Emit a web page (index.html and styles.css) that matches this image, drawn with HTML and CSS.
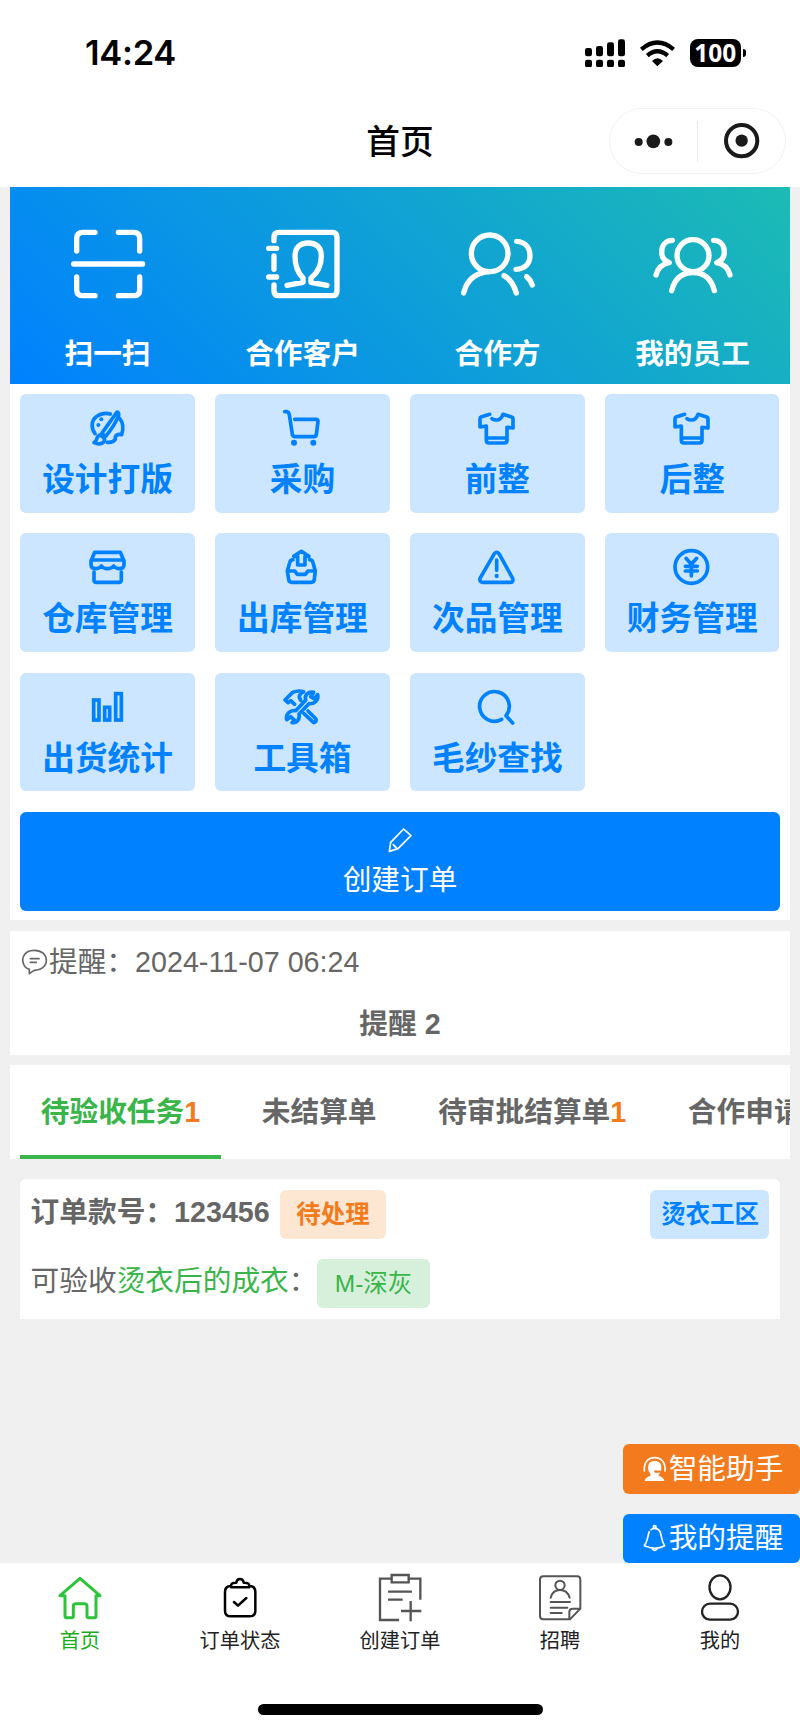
FILE: index.html
```html
<!DOCTYPE html>
<html lang="zh-CN">
<head>
<meta charset="utf-8">
<title>首页</title>
<link rel="stylesheet" href="styles.css">
</head>
<body>
<svg class="defs" aria-hidden="true">
  <symbol id="shirt" viewBox="232 70 120 120"><path d="M270 89L244 97Q241 98 241 103V127L260 124V167Q260 175 268 175H314Q322 175 322 167V128L340 130V103Q340 98 336 97L310 89Q304 106 291 106Q283 106 277 102M262 160H320"/></symbol>
</svg>
<header class="header">
  <div class="status">
    <span class="time">14:24</span>
    <div class="status-icons">
      <svg class="signal" viewBox="555 116 120 86"><rect x="555" y="143" width="21" height="25" rx="7"/><rect x="588" y="137" width="21" height="31" rx="7"/><rect x="621" y="126" width="21" height="42" rx="7"/><rect x="654" y="117" width="21" height="51" rx="7"/><rect x="555" y="178" width="21" height="23" rx="7"/><rect x="588" y="178" width="21" height="23" rx="7"/><rect x="621" y="178" width="21" height="23" rx="7"/><rect x="654" y="178" width="21" height="23" rx="7"/></svg>
      <svg class="wifi" viewBox="720 116 105 86"><path class="arc" d="M724 147Q772 106 821 147M742 166Q772 140 803 166"/><path d="M756 182Q772 166 789 182L772 198Z"/></svg>
      <div class="battery"><span class="battery-body">100</span><span class="battery-cap"></span></div>
    </div>
  </div>
  <div class="navbar">
    <h1 class="title">首页</h1>
    <div class="capsule">
      <svg class="more" viewBox="700 395 125 56"><circle cx="717" cy="425" r="12"/><circle cx="761" cy="423" r="20.500"/><circle cx="806" cy="425" r="12"/></svg>
      <span class="capsule-line"></span>
      <svg class="target" viewBox="970 368 112 112"><circle class="ring" cx="1026" cy="424" r="47"/><circle cx="1026" cy="424" r="18.500"/></svg>
    </div>
  </div>
</header>

<main class="page">
  <section class="panel">
    <nav class="hero">
      <a class="hero-item"><svg class="icon" viewBox="203 116 240 240"><path d="M229 197V160Q229 141 248 141H284M354 141H400Q418 141 418 160V197M220 236H427M229 275V313Q229 331 248 331H284M354 331H400Q418 331 418 313V275"/></svg><span>扫一扫</span></a>
      <a class="hero-item"><svg class="icon" viewBox="788 116 240 240"><path d="M821 166V155Q821 141 836 141H996Q1010 141 1010 156V316Q1010 331 996 331H836Q821 331 821 316V299M821 212V252M805 189H829M805 275H829M860 300L908 291V278C892 262 884 240 884 212C884 186 900 173 924 173C948 173 963 186 963 212C963 240 952 262 932 278V291L980 300"/></svg><span>合作客户</span></a>
      <a class="hero-item"><svg class="icon" viewBox="172 116 240 240"><circle cx="267" cy="204" r="55"/><path d="M189 323C198 285 225 262 267 259M310 271C330 282 340 298 347 323M348 168C375 170 388 188 388 211C388 235 372 250 346 252M378 274Q390 284 395 299"/></svg><span>合作方</span></a>
      <a class="hero-item"><svg class="icon" viewBox="757 116 240 240"><circle cx="877" cy="211" r="48"/><path d="M813 316C822 280 845 262 877 262C909 262 932 280 941 316M815 165C795 165 783 180 783 200C783 215 790 226 806 232C784 236 771 250 766 269M939 165C959 165 971 180 971 200C971 215 964 226 948 232C970 236 983 250 988 269"/></svg><span>我的员工</span></a>
    </nav>
    <div class="tiles">
      <a class="tile"><svg class="icon" viewBox="263 70 120 120"><path d="M284 147C272 130 272 108 288 96C300 86 318 84 330 88M358 101C369 115 369 135 364 150C350 146 343 154 345 164C340 172 331 174 321 173"/><path d="M350 82L304 147L316 155C330 138 346 116 355 92Q356 82 350 82ZM298 151C285 156 295 166 281 174C300 182 316 175 312 160Z"/><circle class="dot" cx="303" cy="104" r="6"/><circle class="dot" cx="294" cy="121" r="6"/></svg><span>设计打版</span></a>
      <a class="tile"><svg class="icon" viewBox="848 70 120 120"><path d="M856 81H862Q868 82 870 90L879 149Q880 156 888 156H944Q950 156 951 150L956 110Q956 104 950 104H886"/><circle class="dot" cx="884" cy="174" r="9"/><circle class="dot" cx="942" cy="174" r="9"/></svg><span>采购</span></a>
      <a class="tile"><svg class="icon"><use href="#shirt"/></svg><span>前整</span></a>
      <a class="tile"><svg class="icon"><use href="#shirt"/></svg><span>后整</span></a>
      <a class="tile"><svg class="icon" viewBox="263 488 120 120"><path d="M283 504L272 530V540Q272 553 285 553Q297 553 303 545Q309 553 321 553Q334 553 340 545Q346 553 358 553Q371 553 371 540V530L360 504ZM273 527H370M281 563V587Q281 594 288 594H356Q363 594 363 587V563"/></svg><span>仓库管理</span></a>
      <a class="tile"><svg class="icon" viewBox="848 488 120 120"><path d="M906 501L929 516H917V542H895V516H883ZM881 526Q873 527 871 535L864 560L868 585Q869 594 878 594H935Q944 594 945 585L948 560L941 535Q939 527 931 526M865 560H886L894 570H918L926 560H947"/></svg><span>出库管理</span></a>
      <a class="tile"><svg class="icon" viewBox="232 488 120 120"><path d="M284 508Q291 500 298 508L339 582Q342 594 333 594H249Q239 594 241 582ZM291 527V558"/><circle class="dot" cx="291" cy="575" r="6.500"/></svg><span>次品管理</span></a>
      <a class="tile"><svg class="icon" viewBox="817 488 120 120"><circle cx="875" cy="548" r="49"/><path d="M859 522L875 540L891 522M875 540V575M857 546H893M857 560H893"/></svg><span>财务管理</span></a>
      <a class="tile"><svg class="icon sharp" viewBox="263 82 120 120"><rect x="280" y="121" width="16" height="60"/><rect x="313" y="143" width="15" height="38"/><rect x="346" y="102" width="17" height="79"/></svg><span>出货统计</span></a>
      <a class="tile"><svg class="icon" viewBox="848 82 120 120"><path d="M943 98C928 95 914 106 919 122L889 153C872 150 858 164 862 180L874 171L885 181L878 189C894 191 902 178 899 163L929 132C946 134 958 122 955 105L944 117L934 111ZM857 121L880 98Q896 91 913 96Q900 101 900 113L904 122M857 121L866 129L874 123L886 134M926 154L950 178Q952 188 943 189L914 162"/></svg><span>工具箱</span></a>
      <a class="tile"><svg class="icon" viewBox="232 82 120 120"><path d="M306 179A44.500 44.500 0 1 1 319 168L339 190"/></svg><span>毛纱查找</span></a>
    </div>
    <a class="create"><svg class="icon" viewBox="1155 495 90 90"><path d="M1168 574L1172 547L1211 507L1233 527L1194 566ZM1180 554L1190 565"/></svg><span>创建订单</span></a>
  </section>

  <section class="notice">
    <div class="notice-head"><svg class="icon" viewBox="61 82 86 86"><path d="M76 138C62 118 70 89 104 89C126 89 140 102 140 119C140 137 124 150 103 149L89 159V146Q81 143 79 141M92 114H118M92 125H110"/></svg><span>提醒：2024-11-07 06:24</span></div>
    <div class="notice-count">提醒 2</div>
  </section>

  <nav class="tabs">
    <a class="tab active">待验收任务<b>1</b></a>
    <a class="tab">未结算单</a>
    <a class="tab">待审批结算单<b>1</b></a>
    <a class="tab">合作申请</a>
  </nav>

  <article class="card">
    <div class="card-row strong"><span>订单款号：123456</span><span class="tag orange">待处理</span><span class="tag blue">烫衣工区</span></div>
    <div class="card-row"><span>可验收<em>烫衣后的成衣</em>：</span><span class="tag green">M-深灰</span></div>
  </article>

  <aside class="floats">
    <a class="float orange-bg"><svg class="icon" viewBox="720 74 86 86"><path d="M733 122C731 96 745 82 764 82C783 82 797 96 795 122"/><path class="solid" d="M744 112C744 98 752 92 764 92C776 92 785 99 784 114L783 121L765 120Q759 124 765 127L781 127L776 133V137Q792 141 793 152H734Q735 141 751 137V130Q744 123 744 112Z"/></svg><span>智能助手</span></a>
    <a class="float blue-bg"><svg class="icon" viewBox="720 281 86 86"><path d="M748 304C742 318 744 332 733 346Q750 353 764 354Q780 353 794 346C783 332 786 318 780 304Q775 294 764 294Q757 294 753 298M757 356Q764 365 771 356"/><circle cx="764" cy="290" r="4"/></svg><span>我的提醒</span></a>
  </aside>
</main>

<footer class="footer">
  <nav class="tabbar">
    <a class="bar-item on"><svg class="icon home" viewBox="165 70 150 150"><path d="M240 86L300 138H288V199Q288 204 283 204H266Q261 204 261 199V170Q261 162 253 162H228Q220 162 220 170V199Q220 204 215 204H200Q195 204 195 199V138H180Z"/></svg><span>首页</span></a>
    <a class="bar-item"><svg class="icon orders" viewBox="645 70 150 150"><path d="M693 109Q675 109 675 127V183Q675 200 693 200H748Q766 200 766 183V127Q766 109 748 109M702 157L714 168L739 145M694 113Q690 98 709 99Q710 88 720 88Q730 88 731 99Q751 98 747 113Z"/></svg><span>订单状态</span></a>
    <a class="bar-item"><svg class="icon thin" viewBox="1125 70 150 150"><path d="M1175 87H1140V211H1197M1175 76H1226V98H1175ZM1226 87H1261V150M1164 126H1236M1164 150H1208M1203 184H1264M1232 154V215"/></svg><span>创建订单</span></a>
    <a class="bar-item"><svg class="icon thin recruit" viewBox="405 430 150 150"><path d="M430 440H531Q541 440 541 450V537L510 569H430Q420 569 420 559V450Q420 440 430 440ZM508 568V547Q508 537 518 537H541M452 504Q458 481 480 481Q502 481 509 504M452 517H510M452 534H502M452 550H485"/><circle cx="480" cy="467" r="14"/></svg><span>招聘</span></a>
    <a class="bar-item"><svg class="icon mine" viewBox="885 430 150 150"><ellipse cx="960" cy="473" rx="31.500" ry="36"/><rect x="906" y="522" width="108" height="48" rx="24"/></svg><span>我的</span></a>
  </nav>
  <div class="home-bar"></div>
</footer>
</body>
</html>
```
FILE: styles.css
```css
* { box-sizing: border-box; }

body {
  margin: 0;
  width: 800px;
  height: 1731px;
  display: flex;
  flex-direction: column;
  overflow: hidden;
  background: #f0f0f0;
  color: #666;
  font: 28.7px/1 "Liberation Sans", "Noto Sans CJK SC", sans-serif;
}

.defs { display: none; }
.icon { display: block; flex: none; overflow: visible; fill: none; stroke: currentColor; stroke-linecap: round; stroke-linejoin: round; }
.icon .dot { fill: currentColor; stroke: none; }
span { white-space: nowrap; }

/* Header */
.header { height: 186.500px; flex: none; background: #fff; color: #000; }
.status { height: 106px; padding: 0 54px 0 85px; display: flex; align-items: center; justify-content: space-between; }
.time { padding-top: 1px; font: 600 34.500px/1 Inter, sans-serif; letter-spacing: -0.3px; }
.status-icons { display: flex; align-items: center; }
.signal { width: 40px; height: 28.700px; margin-right: 15px; }
.wifi { width: 35px; height: 28.700px; margin-right: 15px; }
.wifi .arc { fill: none; stroke: #000; stroke-width: 13; }
.battery { display: flex; align-items: center; gap: 2px; }
.battery-body { width: 51.500px; height: 28px; border-radius: 8px; background: #000; color: #fff; font: 700 24.500px/28px "Noto Sans", sans-serif; text-align: center; }
.battery-cap { width: 3px; height: 8px; border-radius: 0 4px 4px 0; background: #000; }
.navbar { height: 70px; padding: 0 14px 0 609px; display: flex; align-items: center; position: relative; }
.title { position: absolute; left: 0; right: 0; margin: 0; padding-top: 3px; text-align: center; font-size: 33.700px; font-weight: 500; }
.capsule { width: 177px; height: 66.500px; border: 1px solid #f2f2f2; border-radius: 34px; display: flex; align-items: center; fill: #1a1a1a; padding-left: 23px; }
.more { width: 41.700px; height: 18.700px; }
.capsule-line { width: 1px; height: 41px; margin: 0 25px 0 22px; background: #e8e8e8; }
.target { width: 37.300px; height: 37.300px; }
.target .ring { fill: none; stroke: #1a1a1a; stroke-width: 12; }

/* Main panel */
.page { width: 780px; margin: 0 auto; flex: 1; position: relative; }
.panel { height: 733.500px; background: #fff; }
.hero { height: 197px; display: grid; grid-template-columns: repeat(4, 1fr); background: linear-gradient(45deg, #0081ff, #1cbbb4); color: #fff; font-weight: 700; }
.hero-item { display: flex; flex-direction: column; align-items: center; padding-top: 37px; gap: 36px; }
.hero .icon { width: 80px; height: 80px; stroke-width: 16; }
.tiles { display: grid; grid-template-columns: repeat(4, 174.500px); gap: 20.500px 20.400px; padding: 10.300px 10.300px 20.500px; }
.tile { height: 118.900px; padding-top: 14px; border-radius: 6px; background: #cce6ff; color: #0081ff; display: flex; flex-direction: column; align-items: center; gap: 16px; font-size: 32.700px; font-weight: 700; }
.tile .icon { width: 40px; height: 40px; stroke-width: 11; }
.tile .sharp { stroke-linejoin: miter; }
.create { height: 98.700px; margin: 0 10.300px; padding-top: 13px; border-radius: 6px; background: #0081ff; color: #fff; display: flex; flex-direction: column; align-items: center; gap: 11px; }
.create .icon { width: 30px; height: 30px; stroke-width: 5; }

/* Reminder */
.notice { height: 123.500px; margin-top: 11px; padding: 17px 10.300px 0; background: #fff; }
.notice-head { display: flex; align-items: center; }
.notice .icon { width: 28.700px; height: 28.700px; stroke-width: 5; }
.notice-count { margin-top: 33px; text-align: center; font-weight: 700; }

/* Tabs */
.tabs { height: 94.500px; margin-top: 10px; padding: 0 10.300px; background: #fff; display: flex; gap: 20.600px; overflow: hidden; font-weight: 700; }
.tab { flex: none; padding: 0 20.500px; line-height: 95px; white-space: nowrap; }
.tab b { color: #f37b1d; }
.tab.active { color: #39b54a; border-bottom: 4px solid #39b54a; }

/* Task card */
.card { height: 139.500px; margin: 20.300px 10.300px 0; padding: 10.300px; background: #fff; border-radius: 6px 6px 0 0; display: flex; flex-direction: column; gap: 20.300px; }
.card-row { height: 49.200px; display: flex; align-items: center; }
.card-row > span:first-child { position: relative; top: -2px; }
.card em { font-style: normal; color: #39b54a; }
.strong { font-weight: 700; }
.tag { height: 49.200px; line-height: 50px; padding: 0 16.500px; border-radius: 6px; font-size: 24.500px; }
.tag.orange { margin-left: 10px; background: #fde6d2; color: #f37b1d; }
.tag.blue { margin-left: auto; padding: 0 10.500px; background: #cce6ff; color: #0081ff; }
.tag.green { background: #d7f0db; color: #39b54a; padding: 0 17.300px; }

/* Floating shortcuts over the page's lower right corner */
.floats { position: absolute; right: -10px; bottom: 0; display: flex; flex-direction: column; gap: 20.300px; }
.float { width: 176.700px; height: 49.200px; padding-left: 16.700px; border-radius: 6px; display: flex; align-items: center; color: #fff; }
.float .icon { width: 28.700px; height: 28.700px; stroke-width: 5; }
.float .solid { fill: currentColor; stroke: none; }
.orange-bg { background: #f37b1d; }
.blue-bg { background: #0081ff; }

/* Bottom bar */
.footer { height: 168px; flex: none; background: #fff; display: flex; flex-direction: column; align-items: center; }
.tabbar { width: 100%; height: 141px; display: grid; grid-template-columns: repeat(5, 1fr); font-size: 20.200px; color: #222; }
.bar-item { display: flex; flex-direction: column; align-items: center; padding-top: 10px; gap: 8px; }
.bar-item .icon { width: 50px; height: 50px; }
.on { color: #1aad19; }
.home { stroke: #2dc43c; stroke-width: 9; }
.orders { stroke: #000; stroke-width: 7.500; }
.bar-item .thin { stroke: #555; stroke-width: 7; stroke-linecap: butt; stroke-linejoin: miter; }
.bar-item .recruit { stroke-width: 6; stroke-linecap: round; }
.mine { stroke-width: 7; }
.home-bar { width: 285px; height: 10.500px; border-radius: 6px; background: #000; }
```
